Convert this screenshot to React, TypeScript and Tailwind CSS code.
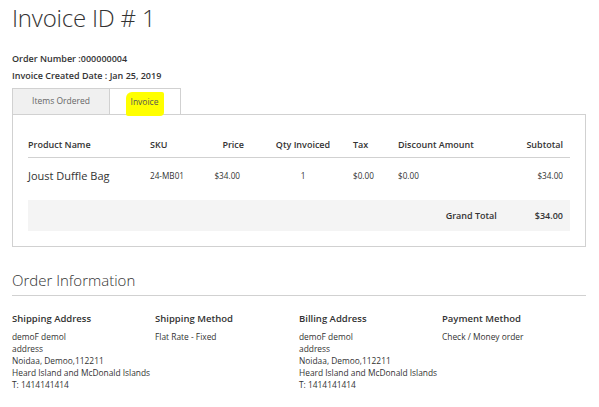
export default function App() {
  const font = { fontFamily: '"Open Sans", "Liberation Sans", sans-serif' };
  return (
    <div className="w-[599px] h-[407px] bg-white text-[#333] overflow-hidden" style={font}>
      <div className="px-[12px]">
        <h1 className="text-[24px] font-light leading-none pt-[6px] text-[#333] tracking-[-0.2px]">Invoice ID # 1</h1>
        <div className="mt-[20px] text-[9px] font-semibold leading-[17px]">
          <div>Order Number :000000004</div>
          <div>Invoice Created Date : Jan 25, 2019</div>
        </div>

        <div className="mt-[4px] flex text-[8.5px]">
          <div className="w-[98px] h-[26px] flex items-center justify-center bg-[#f0f0f0] border border-[#d1d1d1] border-b-0 text-[#666]">
            Items Ordered
          </div>
          <div className="w-[71px] h-[26px] flex items-center justify-center bg-white border border-[#d1d1d1] border-l-0 border-b-0 relative -mb-px z-10">
            <span className="bg-[#ffff00] pl-[5px] pr-[6px] pt-[4px] pb-[8px] rounded-tl-[6px] rounded-br-[4px] rounded-bl-[2px] rounded-tr-[2px] text-[#555] mt-[5px]">
              Invoice
            </span>
          </div>
        </div>

        <div className="border border-[#d1d1d1] w-[574px] h-[133px] px-[15px] pt-[25px]">
          <div className="flex items-end text-[9px] font-semibold leading-none pb-[8px] border-b border-[#d1d1d1] text-[#333]">
            <div className="w-[122px]">Product Name</div>
            <div className="w-[51px]">SKU</div>
            <div className="w-[43px] text-right">Price</div>
            <div className="w-[100px] ml-[9px] text-center">Qty Invoiced</div>
            <div className="w-[45px]">Tax</div>
            <div className="flex-1">Discount Amount</div>
            <div className="text-right pr-[7px]">Subtotal</div>
          </div>
          <div className="flex items-center h-[36px] text-[8.2px] text-[#333]">
            <div className="w-[122px] text-[11px] text-[#333]">Joust Duffle Bag</div>
            <div className="w-[51px]">24-MB01</div>
            <div className="w-[43px] text-right pr-[4px]">$34.00</div>
            <div className="w-[100px] ml-[9px] text-center">1</div>
            <div className="w-[45px]">$0.00</div>
            <div className="flex-1">$0.00</div>
            <div className="text-right pr-[7px]">$34.00</div>
          </div>
          <div className="bg-[#f4f4f4] h-[31px] mt-[6px] flex items-center justify-end text-[9px] font-semibold">
            <div className="pr-[38px]">Grand Total</div>
            <div className="pr-[7px]">$34.00</div>
          </div>
        </div>

        <div className="mt-[26px] text-[15px] font-light text-[#333] leading-none pb-[7px] border-b border-[#d1d1d1] w-[574px]">
          Order Information
        </div>

        <div className="grid grid-cols-[143px_144px_143px_144px] mt-[16px] text-[#333]">
          <div>
            <div className="text-[9.5px] font-semibold leading-[14px]">Shipping Address</div>
            <div className="mt-[5px] text-[8.4px] leading-[12px]">
              <div>demoF demol</div>
              <div>address</div>
              <div>Noidaa, Demoo,112211</div>
              <div>Heard Island and McDonald Islands</div>
              <div>T: 1414141414</div>
            </div>
          </div>
          <div>
            <div className="text-[9.5px] font-semibold leading-[14px]">Shipping Method</div>
            <div className="mt-[5px] text-[8.4px] leading-[12px]">Flat Rate - Fixed</div>
          </div>
          <div>
            <div className="text-[9.5px] font-semibold leading-[14px]">Billing Address</div>
            <div className="mt-[5px] text-[8.4px] leading-[12px]">
              <div>demoF demol</div>
              <div>address</div>
              <div>Noidaa, Demoo,112211</div>
              <div>Heard Island and McDonald Islands</div>
              <div>T: 1414141414</div>
            </div>
          </div>
          <div>
            <div className="text-[9.5px] font-semibold leading-[14px]">Payment Method</div>
            <div className="mt-[5px] text-[8.4px] leading-[12px]">Check / Money order</div>
          </div>
        </div>
      </div>
    </div>
  );
}
